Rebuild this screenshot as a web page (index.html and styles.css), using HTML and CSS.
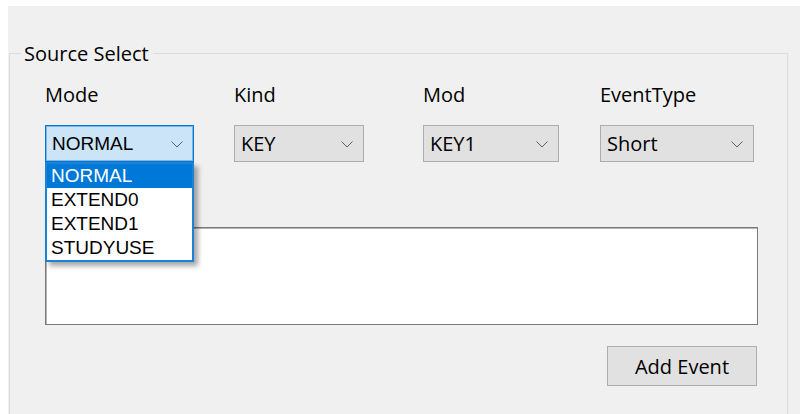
FILE: index.html
```html
<!DOCTYPE html>
<html lang="en">
<head>
<meta charset="utf-8">
<title>Source Select</title>
<link rel="stylesheet" href="styles.css">
</head>
<body>
<div class="window">
  <fieldset class="group">
    <legend class="group-title">Source Select</legend>
    <div class="group-body">
      <div class="fields">
        <div class="field">
          <div class="field-label">Mode</div>
          <div class="combo combo-open combo-classic">
            <span class="combo-value">NORMAL</span>
            <svg class="chevron" width="12" height="7" viewBox="0 0 12 7"><polyline points="0.5,0.5 6,6 11.5,0.5" fill="none" stroke="#606060" stroke-width="1"/></svg>
            <ul class="droplist">
              <li class="droplist-item selected">NORMAL</li>
              <li class="droplist-item">EXTEND0</li>
              <li class="droplist-item">EXTEND1</li>
              <li class="droplist-item">STUDYUSE</li>
            </ul>
          </div>
        </div>
        <div class="field">
          <div class="field-label">Kind</div>
          <div class="combo combo-kind">
            <span class="combo-value">KEY</span>
            <svg class="chevron" width="12" height="7" viewBox="0 0 12 7"><polyline points="0.5,0.5 6,6 11.5,0.5" fill="none" stroke="#606060" stroke-width="1"/></svg>
          </div>
        </div>
        <div class="field">
          <div class="field-label">Mod</div>
          <div class="combo combo-mod">
            <span class="combo-value">KEY1</span>
            <svg class="chevron" width="12" height="7" viewBox="0 0 12 7"><polyline points="0.5,0.5 6,6 11.5,0.5" fill="none" stroke="#606060" stroke-width="1"/></svg>
          </div>
        </div>
        <div class="field">
          <div class="field-label">EventType</div>
          <div class="combo combo-type">
            <span class="combo-value">Short</span>
            <svg class="chevron" width="12" height="7" viewBox="0 0 12 7"><polyline points="0.5,0.5 6,6 11.5,0.5" fill="none" stroke="#606060" stroke-width="1"/></svg>
          </div>
        </div>
      </div>
      <div class="event-list"></div>
      <div class="actions">
        <button class="btn" type="button">Add Event</button>
      </div>
    </div>
  </fieldset>
</div>
</body>
</html>
```
FILE: styles.css
```css
html, body {
  margin: 0;
  padding: 0;
  background: #ffffff;
}

body {
  font-family: "Open Sans", "Noto Sans", sans-serif;
  font-size: 20px;
  color: #000000;
}

.window {
  margin: 6px 0 0 8px;
  height: 408px;
  background: #f0f0f0;
  overflow: hidden;
}

.group {
  margin: 34px 0 0 1px;
  padding: 0;
  width: 777px;
  height: 420px;
  border: 1px solid #dcdcdc;
  box-sizing: content-box;
}

.group-title {
  margin-left: 11px;
  padding: 0 4px 0 3px;
  line-height: 27px;
  font-size: 20px;
}

.group-body {
  padding: 14px 28px 0 35px;
}

.fields {
  display: grid;
  grid-template-columns: 189px 189px 177px 154px;
}

.field {
  display: flex;
  flex-direction: column;
  align-items: flex-start;
}

.field-label {
  line-height: 27px;
  height: 27px;
  margin-bottom: 17px;
}

.combo {
  position: relative;
  box-sizing: border-box;
  height: 37px;
  display: flex;
  align-items: center;
  justify-content: space-between;
  padding: 0 10px 0 6px;
  background: #e1e1e1;
  border: 1px solid #adadad;
}

.combo-value {
  line-height: 27px;
}

.chevron {
  display: block;
  margin-top: 1px;
}

.combo-classic {
  font-family: "Liberation Sans", Arial, sans-serif;
  font-size: 19px;
}

.combo-open {
  width: 149px;
  background: #cce4f7;
  border-color: #0078d7;
  box-shadow: inset 0 0 0 1px #7fb4e3;
}

.combo-kind { width: 130px; }
.combo-mod { width: 136px; }
.combo-type { width: 154px; }

/* open dropdown of the Mode box */
.droplist {
  position: absolute;
  left: -1px;
  top: 36px;
  width: 149px;
  box-sizing: border-box;
  margin: 0;
  padding: 0;
  list-style: none;
  background: #ffffff;
  border: 2px solid #1a82d8;
  box-shadow: 4px 4px 5px rgba(0, 0, 0, 0.35);
  z-index: 2;
}

.droplist-item {
  height: 24px;
  line-height: 24px;
  padding-left: 4px;
  white-space: nowrap;
}

.droplist-item.selected {
  background: #0078d7;
  color: #ffffff;
}

.event-list {
  margin-top: 65px;
  width: 713px;
  height: 98px;
  box-sizing: border-box;
  background: #ffffff;
  border: 1px solid #7a7a7a;
  box-shadow: inset 1px 1px 0 #b4b4b4;
}

.actions {
  display: flex;
  justify-content: flex-end;
  width: 712px;
  margin-top: 21px;
}

.btn {
  width: 150px;
  height: 40px;
  padding: 0;
  font-family: "Open Sans", "Noto Sans", sans-serif;
  font-size: 20px;
  color: #000000;
  background: #e1e1e1;
  border: 1px solid #adadad;
}
```
